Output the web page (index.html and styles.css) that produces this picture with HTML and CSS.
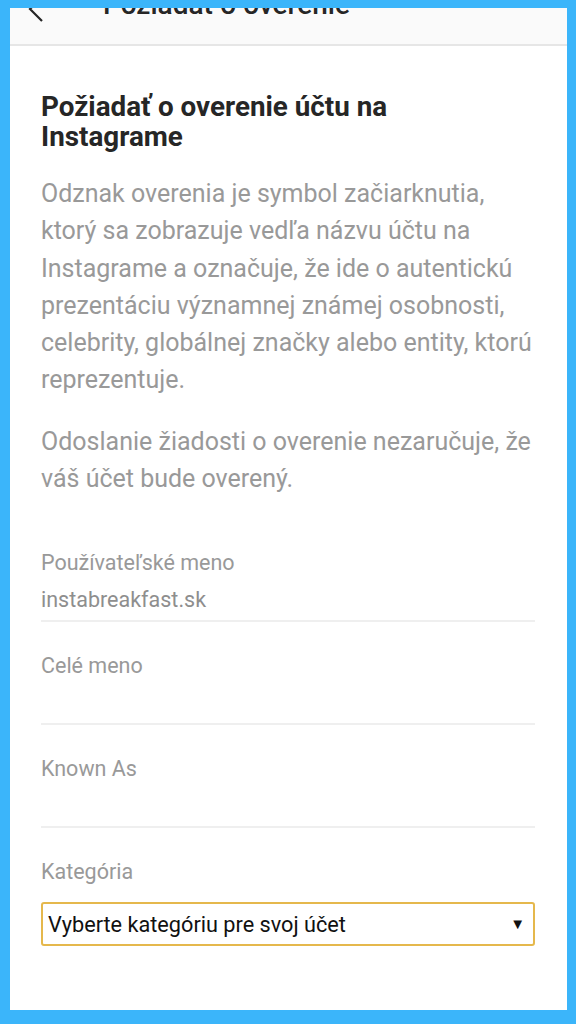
FILE: index.html
```html
<!DOCTYPE html>
<html>
<head>
    <title>Požiadať o overenie</title>
    <link rel="stylesheet" href="styles.css">
</head>
<body>
    <div class="phone">
        <div class="screen">
            <div class="topbar">
                <span class="back">
                    <svg width="20" height="30" viewBox="0 0 20 30"><path d="M15 0 L3 12 L15 24" stroke="#262626" stroke-width="2.2" fill="none"/></svg>
                </span>
                <span class="bar-title">Požiadať o overenie</span>
            </div>
            <div class="content">
                <h1>Požiadať o overenie účtu na Instagrame</h1>
                <p class="info">Odznak overenia je symbol začiarknutia, ktorý sa zobrazuje vedľa názvu účtu na Instagrame a označuje, že ide o autentickú prezentáciu významnej známej osobnosti, celebrity, globálnej značky alebo entity, ktorú reprezentuje.</p>
                <p class="info">Odoslanie žiadosti o overenie nezaručuje, že váš účet bude overený.</p>

                <div class="fields">
                    <div class="field">
                        <div class="label">Používateľské meno</div>
                        <div class="value">instabreakfast.sk</div>
                    </div>
                    <div class="field">
                        <div class="label">Celé meno</div>
                        <div class="value"></div>
                    </div>
                    <div class="field">
                        <div class="label">Known As</div>
                        <div class="value"></div>
                    </div>
                    <div class="label">Kategória</div>
                    <div class="select">
                        <span>Vyberte kategóriu pre svoj účet</span>
                        <span class="arrow">▼</span>
                    </div>
                </div>
            </div>
        </div>
    </div>
</body>
</html>
```
FILE: styles.css
```css
body {
    margin: 0;
    background-color: #3bb5fa;
    font-family: Roboto, "Noto Sans", sans-serif;
}
.phone {
    height: 1024px;
    box-sizing: border-box;
    padding: 8px 9px 14px 10px;
}
.screen {
    height: 100%;
    background-color: white;
    display: flex;
    flex-direction: column;
}
.topbar {
    height: 36px;
    background-color: #fafafa;
    border-bottom: 2px solid #e6e6e6;
    overflow: hidden;
    display: flex;
    align-items: flex-start;
}
.back {
    margin: -11px 0 0 17px;
    width: 20px;
    height: 30px;
}
.bar-title {
    margin: -20px 0 0 56px;
    font-size: 28px;
    font-weight: 500;
    color: #262626;
    line-height: 34px;
}
.content {
    padding: 46px 32px 0 31px;
}
h1 {
    margin: 0 0 23px;
    padding-right: 60px;
    font-size: 27.8px;
    font-weight: bold;
    line-height: 30px;
    color: #262626;
}
.info {
    margin: 0 -4px 24px 0;
    font-size: 25px;
    line-height: 37.3px;
    color: #999;
}
.fields {
    margin-top: 47px;
}
.field {
    padding-bottom: 2px;
    border-bottom: 2px solid #efefef;
    margin-bottom: 25px;
}
.label, .value {
    font-size: 21.5px;
    line-height: 37px;
    color: #999;
    height: 37px;
}
.value {
    color: #8e8e8e;
}
.select {
    margin-top: 12px;
    height: 44px;
    box-sizing: border-box;
    border: 2px solid #e5b84c;
    border-radius: 3px;
    display: flex;
    align-items: center;
    justify-content: space-between;
    padding: 0 8px 0 5px;
    font-size: 21.7px;
    color: #111;
}
.arrow {
    font-size: 15px;
}
```
